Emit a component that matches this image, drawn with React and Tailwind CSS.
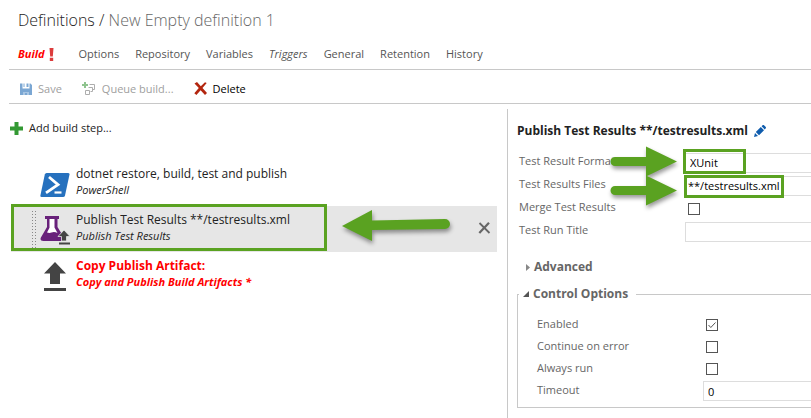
const TABS = [
  { label: 'Options' },
  { label: 'Repository' },
  { label: 'Variables' },
  { label: 'Triggers', italic: true },
  { label: 'General' },
  { label: 'Retention' },
  { label: 'History' },
];

function SaveIcon() {
  return (
    <svg width="12" height="12" viewBox="0 0 12 12" aria-hidden="true">
      <path d="M0 0.5h2.5v5h7v-5h1l1.5 1.5v10H0z" fill="#7ba7d3" />
      <path d="M6.5 0.5h2v3.5h-2zM3.5 0.5h1v3.5h-1z" fill="#7ba7d3" />
      <path d="M3 9h6v3H7V10H5v2H3z" fill="#a9c6e3" />
    </svg>
  );
}

function QueueIcon() {
  return (
    <svg width="14" height="14" viewBox="0 0 14 14" fill="none" aria-hidden="true">
      <path d="M3 0v6M0 3h6" stroke="#8fc48f" strokeWidth="2" />
      <path d="M7.5 2.5h5v5h-2M6.5 5.5h4v4h-2M3.5 8.5h4v4h-4z" stroke="#adadad" />
    </svg>
  );
}

function DeleteIcon() {
  return (
    <svg width="13" height="13" viewBox="0 0 13 13" aria-hidden="true">
      <path d="M0.500 1.500L3 0l3.800 4.200L11 0.300l1.700 0.700L8.500 6l4.500 5-2 1.900L6.600 8.200 2.400 13 0.300 11.300 4.800 6.100z" fill="#b3260f" />
    </svg>
  );
}

function PlusIcon() {
  return (
    <svg width="13" height="13" viewBox="0 0 13 13" aria-hidden="true">
      <path d="M4.5 0h4v4.5H13v4H8.5V13h-4V8.5H0v-4h4.5z" fill="#339933" />
    </svg>
  );
}

function PowerShellIcon() {
  return (
    <svg width="30" height="26" viewBox="0 0 30 26" aria-hidden="true">
      <path d="M6.6 1h21.6q1.6 0 1.3 1.6L25 23.4q-.4 1.6-2 1.6H1.6q-1.5 0-1.2-1.6L4.8 2.6Q5.2 1 6.600 1z" fill="#2671be" />
      <path d="M9 5l9 7.600L6 20.800" fill="none" stroke="#fff" strokeWidth="2.800" />
      <path d="M14.500 20.500h7" stroke="#fff" strokeWidth="2.200" />
    </svg>
  );
}

function FlaskIcon() {
  return (
    <svg width="30" height="30" viewBox="0 0 30 30" aria-hidden="true">
      <path d="M5 1h14v3h-1.500v8l5.500 9v5H3.500q-4 0-2.600-3.500L7 12V4H5z" fill="#68217a" />
      <path d="M9.500 4h5v8.500l3 5.500q-3-1.500-6-.5-2 .8-4.500 0l2.500-4.800z" fill="#fff" />
      <path d="M24 15l6 6.500h-3.500V26h-5v-4.500h-3.500z" fill="#444" stroke="#e6e6e6" strokeWidth=".8" />
      <path d="M19 28.500h11" stroke="#444" strokeWidth="2" />
    </svg>
  );
}

function UploadIcon() {
  return (
    <svg width="22" height="29" viewBox="0 0 22 29" aria-hidden="true">
      <path d="M11 0l11 11.500h-6V22H6V11.500H0z" fill="#444" />
      <path d="M0 26h22v3H0z" fill="#444" />
    </svg>
  );
}

function CloseIcon() {
  return (
    <svg width="13" height="12" viewBox="0 0 13 12" fill="none" aria-hidden="true">
      <path d="M1.500 1l10 10" stroke="#666" strokeWidth="1.800" />
      <path d="M11 .8L1.300 11" stroke="#666" strokeWidth="2.200" />
    </svg>
  );
}

function PencilIcon() {
  return (
    <svg width="12" height="12" viewBox="0 0 12 12" fill="#0f5cad" aria-hidden="true">
      <path d="M0 12l1-4 3 3zM1.800 7l5-5 3.200 3.200-5 5zM7.600 1.200L8.800 0q.6-.3 1.200.2l1.800 1.800q.4.600 0 1.200l-1.100 1.200z" />
    </svg>
  );
}

function RightArrow({ className }) {
  return (
    <svg className={`pointer-events-none absolute drop-shadow-[1px_3px_2px_rgba(0,0,0,0.4)] ${className}`} width="68" height="34" viewBox="0 0 68 34" aria-hidden="true">
      <path d="M5 12h31V1.500l31 15L36 31.500V21H5a4.500 4.500 0 0 1 0-9z" fill="#5aa221" />
    </svg>
  );
}

function LeftArrow() {
  return (
    <svg className="pointer-events-none absolute left-[330px] top-1 drop-shadow-[1px_3px_2px_rgba(0,0,0,0.4)]" width="110" height="32" viewBox="0 0 110 32" aria-hidden="true">
      <path d="M1 16L31 0v10.500l73-1.500a5 5 0 0 1 0 10L31 20v11z" fill="#5aa221" />
    </svg>
  );
}

function Step({ icon, title, subtitle, error }) {
  return (
    <>
      <span className="flex w-[30px] shrink-0 justify-center">{icon}</span>
      <div className={error ? 'font-bold text-[#ff0000]' : 'text-[#222]'}>
        <div className="text-[12px] leading-4">{title}</div>
        <div className="text-[11px] leading-4 italic">{subtitle}</div>
      </div>
    </>
  );
}

function Check({ id, checked }) {
  return (
    <span className="relative flex size-3">
      <input id={id} type="checkbox" defaultChecked={checked} className="peer size-3 appearance-none border border-[#555] bg-white" />
      <svg className="pointer-events-none absolute inset-0 hidden peer-checked:block" width="12" height="12" viewBox="0 0 12 12" fill="none" aria-hidden="true">
        <path d="M2.500 6l2.300 2.500L9.500 3.500" stroke="#555" />
      </svg>
    </span>
  );
}

function Field({ id, label, wide, compact, children }) {
  return (
    <div className={`flex items-center ${compact ? 'h-[22px]' : 'h-[23px]'}`}>
      <label htmlFor={id} className={`w-[166px] shrink-0 text-[#666] ${compact ? 'pb-[2px]' : 'pb-1'}`}>{label}</label>
      <div className={wide ? 'relative min-w-0 flex-1' : 'relative pl-[3px]'}>{children}</div>
    </div>
  );
}

export default function App() {
  return (
    <div className="min-h-screen overflow-hidden bg-white pl-[9px] font-['Open_Sans','Noto_Sans',sans-serif] text-[11px] leading-4 text-[#222]">
      <header className="pt-2 pl-[9px]">
        <h1 className="text-[16px] leading-6 font-light text-[#222]">
          Definitions / <span className="text-[#666]">New Empty definition 1</span>
        </h1>
      </header>

      <nav className="mt-3 flex h-[26px] items-start gap-4 border-b border-[#c8c8c8] pt-[2px] pl-[9px] text-[#555]">
        <a href="#build" className="mr-[9px] flex items-center gap-1 font-bold text-[#ff0000] italic">
          Build
          <svg width="5" height="13" viewBox="0 0 5 13" fill="#dc3c3c" aria-hidden="true">
            <path d="M.5 0h4L3.800 8.500H1.200zM.8 9.800h3.400V13H.8z" />
          </svg>
        </a>
        {TABS.map((t) => (
          <a key={t.label} href={`#${t.label.toLowerCase()}`} className={t.italic ? 'italic' : ''}>{t.label}</a>
        ))}
      </nav>

      <div className="flex h-[34px] items-center gap-5 border-b border-[#c8c8c8] pt-1 pl-[11px]">
        <button type="button" disabled className="flex items-center gap-[6px] text-[#a0a0a0]"><SaveIcon />Save</button>
        <button type="button" disabled className="flex items-center gap-[6px] text-[#a0a0a0]"><QueueIcon />Queue build...</button>
        <button type="button" className="flex items-center gap-[6px] text-black"><DeleteIcon />Delete</button>
      </div>

      <main className="flex pt-[5px]">
        <section className="w-[498px] shrink-0 pt-[11px]">
          <button type="button" className="flex items-center gap-[6px] pl-px"><PlusIcon />Add build step...</button>
          <ul className="mt-[26px] pl-[2px]">
            <li className="flex h-[44px] items-start gap-[6px] pt-1 pl-[29px]">
              <Step icon={<span className="pt-[6px]"><PowerShellIcon /></span>} title="dotnet restore, build, test and publish" subtitle="PowerShell" />
            </li>
            <li className="relative flex h-[46px] w-[486px] items-start gap-[6px] bg-[#e6e6e6] pt-[6px] pl-[29px]">
              <span className="absolute top-1 left-5 h-[39px] w-[6px] bg-[radial-gradient(#888_1px,transparent_1px)] bg-[size:3px_3px]" />
              <Step icon={<span className="pt-[3px]"><FlaskIcon /></span>} title="Publish Test Results **/testresults.xml" subtitle="Publish Test Results" />
              <button type="button" aria-label="Remove step" className="mt-[10px] mr-[6px] ml-auto"><CloseIcon /></button>
              <span className="pointer-events-none absolute -top-[2px] left-0 h-[47px] w-[316px] border-3 border-[#5aa221]" />
              <LeftArrow />
            </li>
            <li className="flex items-start gap-[6px] pt-[6px] pl-[29px]">
              <Step error icon={<span className="pt-1"><UploadIcon /></span>} title="Copy Publish Artifact:" subtitle="Copy and Publish Build Artifacts *" />
            </li>
          </ul>
        </section>

        <section className="h-[309px] min-w-0 flex-1 border-l border-[#c8c8c8] pt-[14px]">
          <h2 className="flex items-center gap-[6px] pl-[9px] text-[12px] leading-4 font-bold">
            <span className="whitespace-nowrap">Publish Test Results **/testresults.xml</span>
            <button type="button" aria-label="Rename"><PencilIcon /></button>
          </h2>

          <div className="mt-3 pl-[11px]">
            <Field id="format" label="Test Result Format" wide>
              <select id="format" defaultValue="XUnit" className="block h-5 w-full appearance-none border border-r-0 border-[#ddd] bg-white pl-1 text-black">
                <option>XUnit</option>
                <option>JUnit</option>
              </select>
              <span className="pointer-events-none absolute -top-1 -left-[2px] h-[25px] w-[63px] border-3 border-[#5aa221]" />
              <RightArrow className="-top-2 -left-[75px]" />
            </Field>
            <Field id="files" label="Test Results Files" wide>
              <input id="files" defaultValue="**/testresults.xml" className="block h-5 w-full border border-r-0 border-[#ddd] pl-[2px] text-black" />
              <span className="pointer-events-none absolute -top-[1px] -left-[1px] h-[23px] w-[100px] border-3 border-[#5aa221]" />
              <RightArrow className="-top-[2px] -left-[75px]" />
            </Field>
            <Field id="merge" label="Merge Test Results"><Check id="merge" /></Field>
            <Field id="title" label="Test Run Title" wide>
              <input id="title" className="block h-5 w-full border border-r-0 border-[#ddd] pl-1" />
            </Field>
          </div>

          <button type="button" className="mt-4 flex items-center gap-1 pl-[18px] text-[12px] leading-4 font-bold text-[#666]">
            <svg width="4" height="7" viewBox="0 0 4 7" aria-hidden="true"><path d="M0 0l4 3.500L0 7z" fill="#888" /></svg>
            Advanced
          </button>

          <fieldset className="mt-[11px] ml-[9px] h-[122px] min-w-0 border border-r-0 border-[#c8c8c8]">
            <legend className="ml-px pr-2 pl-1 text-[12px] leading-4 font-bold text-[#666]">
              <button type="button" className="flex items-center gap-1">
                <svg width="6" height="6" viewBox="0 0 6 6" aria-hidden="true"><path d="M6 0v6H0z" fill="#555" /></svg>
                Control Options
              </button>
            </legend>
            <div className="flex flex-col pt-3 pl-[19px]">
              <Field compact id="enabled" label="Enabled"><Check id="enabled" checked /></Field>
              <Field compact id="continue" label="Continue on error"><Check id="continue" /></Field>
              <Field compact id="always" label="Always run"><Check id="always" /></Field>
              <Field compact id="timeout" label="Timeout" wide>
                <input id="timeout" defaultValue="0" className="block h-5 w-full border border-r-0 border-[#ddd] pl-1 text-black" />
              </Field>
            </div>
          </fieldset>
        </section>
      </main>
    </div>
  );
}
